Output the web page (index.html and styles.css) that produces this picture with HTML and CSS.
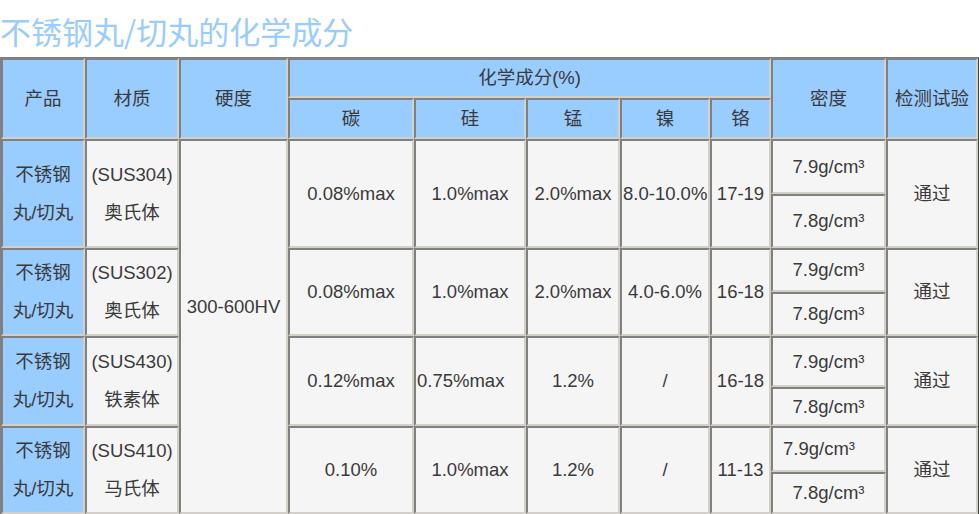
FILE: index.html
```html
<!DOCTYPE html>
<html lang="zh-CN">
<head>
<meta charset="utf-8">
<title>不锈钢丸/切丸的化学成分</title>
<link rel="stylesheet" href="styles.css">
</head>
<body>
<h1 class="title">不锈钢丸/切丸的化学成分</h1>
<table class="spec">
  <colgroup>
    <col class="c1"><col class="c2"><col class="c3"><col class="c4"><col class="c5">
    <col class="c6"><col class="c7"><col class="c8"><col class="c9"><col class="c10">
  </colgroup>
  <thead>
    <tr class="h1">
      <th rowspan="2">产品</th>
      <th rowspan="2">材质</th>
      <th rowspan="2">硬度</th>
      <th colspan="5">化学成分(%)</th>
      <th rowspan="2">密度</th>
      <th rowspan="2">检测试验</th>
    </tr>
    <tr class="h2">
      <th>碳</th><th>硅</th><th>锰</th><th>镍</th><th>铬</th>
    </tr>
  </thead>
  <tbody>
    <tr class="r1a">
      <td rowspan="2" class="prod">不锈钢<br>丸/切丸</td>
      <td rowspan="2">(SUS304)<br>奥氏体</td>
      <td rowspan="8" class="hard">300-600HV</td>
      <td rowspan="2">0.08%max</td>
      <td rowspan="2">1.0%max</td>
      <td rowspan="2">2.0%max</td>
      <td rowspan="2">8.0-10.0%</td>
      <td rowspan="2">17-19</td>
      <td class="dens">7.9g/cm³</td>
      <td rowspan="2">通过</td>
    </tr>
    <tr class="r1b"><td class="dens">7.8g/cm³</td></tr>
    <tr class="r2a">
      <td rowspan="2" class="prod">不锈钢<br>丸/切丸</td>
      <td rowspan="2">(SUS302)<br>奥氏体</td>
      <td rowspan="2">0.08%max</td>
      <td rowspan="2">1.0%max</td>
      <td rowspan="2">2.0%max</td>
      <td rowspan="2">4.0-6.0%</td>
      <td rowspan="2">16-18</td>
      <td class="dens">7.9g/cm³</td>
      <td rowspan="2">通过</td>
    </tr>
    <tr class="r2b"><td class="dens">7.8g/cm³</td></tr>
    <tr class="r3a">
      <td rowspan="2" class="prod">不锈钢<br>丸/切丸</td>
      <td rowspan="2">(SUS430)<br>铁素体</td>
      <td rowspan="2">0.12%max</td>
      <td rowspan="2" class="left">0.75%max</td>
      <td rowspan="2">1.2%</td>
      <td rowspan="2">/</td>
      <td rowspan="2">16-18</td>
      <td class="dens">7.9g/cm³</td>
      <td rowspan="2">通过</td>
    </tr>
    <tr class="r3b"><td class="dens">7.8g/cm³</td></tr>
    <tr class="r4a">
      <td rowspan="2" class="prod">不锈钢<br>丸/切丸</td>
      <td rowspan="2">(SUS410)<br>马氏体</td>
      <td rowspan="2">0.10%</td>
      <td rowspan="2">1.0%max</td>
      <td rowspan="2">1.2%</td>
      <td rowspan="2">/</td>
      <td rowspan="2">11-13</td>
      <td class="dens dleft">7.9g/cm³</td>
      <td rowspan="2">通过</td>
    </tr>
    <tr class="r4b"><td class="dens">7.8g/cm³</td></tr>
  </tbody>
</table>
</body>
</html>
```

FILE: styles.css
```css
* { box-sizing: border-box; }

html, body {
  margin: 0;
  padding: 0;
  background: #ffffff;
}

body {
  font-family: "Liberation Sans", "Noto Sans CJK SC", sans-serif;
  color: #3a3a3a;
}

.title {
  margin: 0;
  padding: 13px 0 8px 0;
  font-family: "Noto Sans CJK SC", "Liberation Sans", sans-serif;
  font-size: 31px;
  line-height: 36px;
  font-weight: normal;
  color: #99ccff;
}

.spec {
  width: 979px;
  table-layout: fixed;
  border-collapse: separate;
  border-spacing: 0;
  border: 1px solid;
  border-color: #808080 #404040 #404040 #808080;
  font-size: 18.5px;
}

.c1 { width: 84px; }
.c2 { width: 94px; }
.c3 { width: 109px; }
.c4 { width: 126px; }
.c5 { width: 112px; }
.c6 { width: 94px; }
.c7 { width: 90px; }
.c8 { width: 61px; }
.c9 { width: 115px; }
.c10 { width: 92px; }

.spec th,
.spec td {
  border: 2px solid;
  border-color: #808080 #d4d0c8 #d4d0c8 #808080;
  padding: 0 1px;
  text-align: center;
  vertical-align: middle;
  font-weight: normal;
  line-height: 38px;
  white-space: nowrap;
  color: #3a3a3a;
}

.spec th {
  background: #99ccff;
  line-height: 24px;
}

.spec td {
  background: #f5f5f5;
}

.spec td.prod {
  background: #99ccff;
}

.spec td.dens {
  line-height: 24px;
}

.spec td.hard {
  padding-bottom: 40px;
}

.spec td.left {
  text-align: left;
  padding-left: 1px;
}

.spec td.dleft {
  text-align: left;
  padding-left: 10px;
}

.h1 { height: 40px; }
.h2 { height: 41px; }
.r1a { height: 55px; }
.r1b { height: 54px; }
.r2a { height: 44px; }
.r2b { height: 44px; }
.r3a { height: 51px; }
.r3b { height: 39px; }
.r4a { height: 46px; }
.r4b { height: 42px; }
```
